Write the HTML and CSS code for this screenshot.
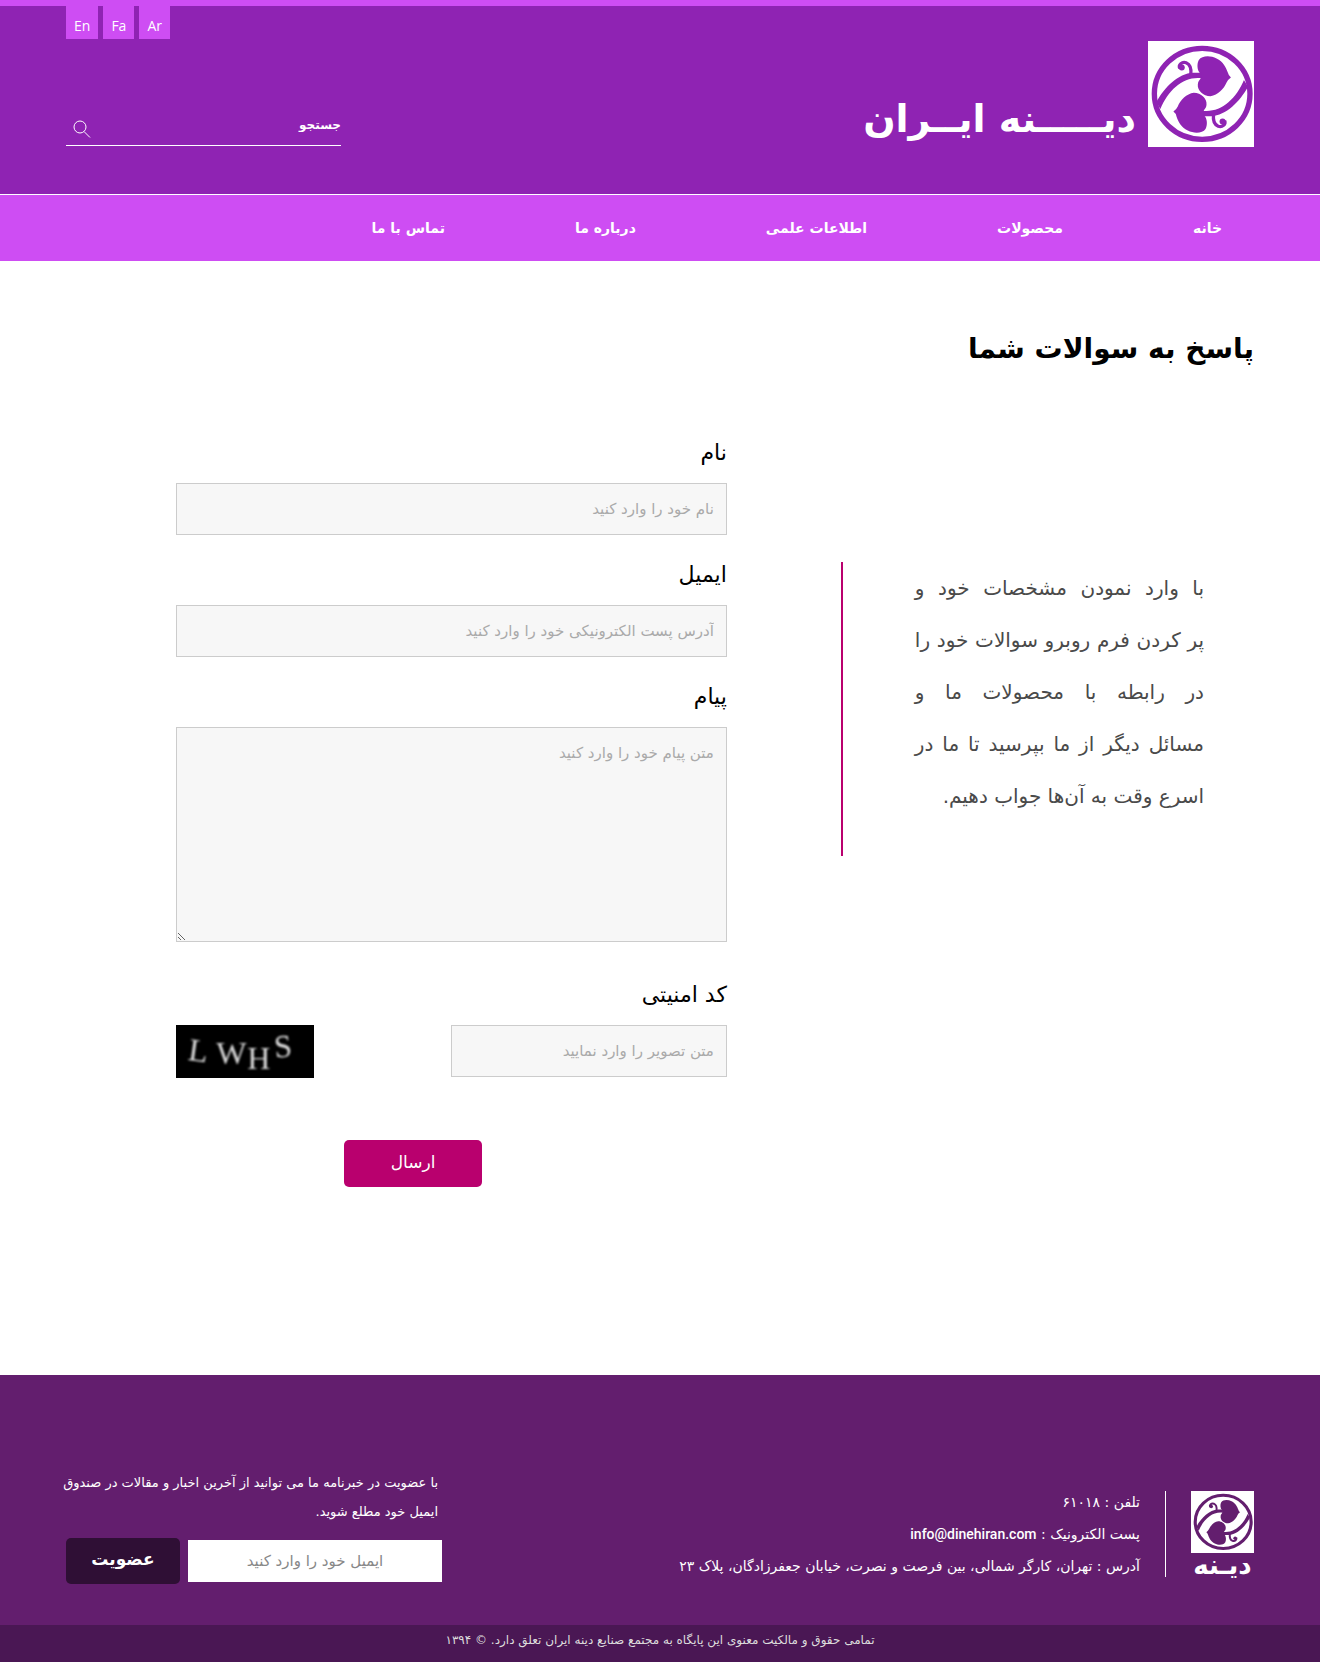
FILE: index.html
```html
<!DOCTYPE html>
<html lang="fa" dir="rtl">
<head>
<meta charset="utf-8">
<meta name="viewport" content="width=device-width, initial-scale=1">
<title>پاسخ به سوالات شما</title>
<link rel="stylesheet" href="styles.css">
</head>
<body>
<svg class="sprite" aria-hidden="true">
  <defs>
    <g id="leaf">
      <path d="M181 116C171 107 171 86 177 76C186 62 212 62 230 71C250 80 259 99 264 114Q266 123 273 128Q264 134 260 143C252 162 234 181 212 184C190 184 172 166 174 149C174 141 178 137 182 132Z"/>
      <path d="M50 202C74 158 115 116 160 114L184 114L184 130C132 124 86 164 62 222Z"/>
      <path d="M153 120C155 103 151 89 139 84C127 80 115 90 120 101" fill="none" stroke="currentColor" stroke-width="10"/>
      <circle cx="126" cy="98" r="9"/>
    </g>
    <symbol id="emblem" viewBox="25 19 317 317">
      <g fill="currentColor">
        <use href="#leaf"/>
        <use href="#leaf" transform="rotate(180 187 179)"/>
      </g>
      <ellipse cx="187" cy="177" rx="143" ry="136" fill="none" stroke="currentColor" stroke-width="16"/>
    </symbol>
  </defs>
</svg>

<header class="header">
  <div class="container header-row">
    <a class="brand" href="#">
      <svg class="brand-mark" aria-hidden="true"><use href="#emblem"/></svg>
      <span class="brand-name">دیـــــنه ایــران</span>
    </a>
    <div class="tools">
      <div class="languages" dir="ltr">
        <a href="#">En</a>
        <a href="#">Fa</a>
        <a href="#">Ar</a>
      </div>
      <form class="search">
        <input type="text" placeholder="جستجو" aria-label="جستجو">
        <button type="button" aria-label="جستجو">
          <svg viewBox="0 0 18 18" width="18" height="18" fill="none" stroke="#fff" aria-hidden="true"><circle cx="7" cy="7" r="6"/><path d="M11 11.500L17 17.500"/></svg>
        </button>
      </form>
    </div>
  </div>
</header>

<nav class="nav">
  <ul class="container nav-list">
    <li><a href="#">خانه</a></li>
    <li><a href="#">محصولات</a></li>
    <li><a href="#">اطلاعات علمی</a></li>
    <li><a href="#">درباره ما</a></li>
    <li><a href="#">تماس با ما</a></li>
  </ul>
</nav>

<main class="container main">
  <h1>پاسخ به سوالات شما</h1>
  <div class="contact">
    <p class="intro">با وارد نمودن مشخصات خود و پر&nbsp;کردن فرم روبرو سوالات خود را در رابطه با محصولات ما و مسائل&nbsp;دیگر از ما بپرسید تا ما در اسرع وقت به آن‌ها جواب دهیم.</p>
    <form class="form">
      <label for="name">نام</label>
      <input class="field" id="name" type="text" placeholder="نام خود را وارد کنید">
      <label for="email">ایمیل</label>
      <input class="field" id="email" type="text" placeholder="آدرس پست الکترونیکی خود را وارد کنید">
      <label for="message">پیام</label>
      <textarea class="field message" id="message" placeholder="متن پیام خود را وارد کنید"></textarea>
      <label for="code">کد امنیتی</label>
      <div class="captcha-row">
        <input class="field" id="code" type="text" placeholder="متن تصویر را وارد نمایید">
        <svg class="captcha" viewBox="0 0 137 53" role="img" aria-label="LWHS">
          <g class="captcha-text">
            <text x="12" y="36" transform="rotate(8 20 28)">L</text>
            <text x="40" y="39">W</text>
            <text x="71" y="44">H</text>
            <text x="98" y="32" transform="rotate(-5 106 25)">S</text>
          </g>
        </svg>
      </div>
      <button class="send" type="button">ارسال</button>
    </form>
  </div>
</main>

<footer class="footer">
  <div class="container footer-row">
    <div class="footer-brand">
      <svg class="footer-mark" aria-hidden="true"><use href="#emblem"/></svg>
      <span>دیـنه</span>
    </div>
    <address class="details">
      <span>تلفن : ۶۱۰۱۸</span>
      <span>پست الکترونیک : <a href="#">info@dinehiran.com</a></span>
      <span>آدرس : تهران، کارگر شمالی، بین فرصت و نصرت، خیابان جعفرزادگان، پلاک ۲۳</span>
    </address>
    <form class="newsletter">
      <p>با عضویت در خبرنامه ما می توانید از آخرین اخبار و مقالات در صندوق ایمیل خود مطلع شوید.</p>
      <div class="subscribe">
        <input type="text" placeholder="ایمیل خود را وارد کنید" aria-label="ایمیل">
        <button type="button">عضویت</button>
      </div>
    </form>
  </div>
  <p class="copyright">تمامی حقوق و مالکیت معنوی این پایگاه به مجتمع صنایع دینه ایران تعلق دارد. © ۱۳۹۴</p>
</footer>
</body>
</html>
```

FILE: styles.css
```css
* {
  box-sizing: border-box;
}

body {
  margin: 0;
  background: #fff;
  color: #000;
  font-family: "DejaVu Sans", sans-serif;
}

a {
  color: inherit;
  text-decoration: none;
}

input,
textarea,
button {
  font-family: inherit;
  margin: 0;
}

.sprite {
  position: absolute;
  width: 0;
  height: 0;
}

.container {
  width: 90%;
  margin: 0 auto;
}

.header {
  background: #8f23b3;
  color: #fff;
  border-top: 6px solid #ce4df3;
  border-bottom: 1px solid #fff;
}

.header-row {
  display: flex;
  justify-content: space-between;
  min-height: 188px;
}

.brand {
  display: flex;
  align-items: flex-start;
  gap: 12px;
  padding-top: 35px;
}

.brand-mark {
  width: 106px;
  height: 106px;
  background: #fff;
  color: #8f23b3;
}

.brand-name {
  font-size: 38px;
  font-weight: bold;
  line-height: 48px;
  padding-top: 54px;
}

.tools {
  width: 275px;
  display: flex;
  flex-direction: column;
  gap: 66px;
}

.languages {
  display: flex;
  gap: 5px;
  font-family: "Open Sans", sans-serif;
  font-size: 14px;
}

.languages a {
  background: #ce4df3;
  padding: 6px 8px 0;
  height: 33px;
  line-height: 27px;
}

.search {
  display: flex;
  align-items: center;
  height: 41px;
  border-bottom: 1px solid #fff;
}

.search input {
  flex: 1;
  min-width: 0;
  padding: 0;
  border: 0;
  background: none;
  color: #fff;
  font-size: 12px;
  font-weight: bold;
}

.search input::placeholder {
  color: #fff;
}

.search button {
  padding: 7px 7px 0;
  border: 0;
  background: none;
  line-height: 0;
}

.nav {
  background: #ce4df3;
  color: #fff;
}

.nav-list {
  display: flex;
  gap: 130px;
  padding: 0 32px;
  list-style: none;
  font-size: 14px;
  font-weight: bold;
  line-height: 66px;
  white-space: nowrap;
}

.main {
  padding: 56px 0 188px;
}

h1 {
  margin: 0;
  font-size: 28px;
  line-height: 64px;
}

.contact {
  display: grid;
  grid-template-columns: 3fr 4fr;
  column-gap: 114px;
  padding: 48px 0 0 110px;
}

.intro {
  align-self: start;
  margin: 133px 0 0;
  padding: 0 50px 34px 72px;
  border-left: 2px solid #b9006e;
  color: #4a4a4a;
  font-size: 20px;
  line-height: 52px;
  text-align: justify;
}

.form {
  display: flex;
  flex-direction: column;
}

.form label {
  font-size: 22px;
  line-height: 48px;
  padding-bottom: 6px;
}

.field {
  width: 100%;
  height: 52px;
  margin-bottom: 16px;
  padding: 0 12px;
  border: 1px solid #ccc;
  border-radius: 0;
  background: #f7f7f7;
  font-size: 15px;
}

.field::placeholder {
  color: #aaa;
}

.message {
  height: 215px;
  margin-bottom: 29px;
  padding-top: 16px;
}

.captcha-row {
  display: flex;
  justify-content: space-between;
}

.captcha-row .field {
  width: 50%;
}

.captcha {
  width: 25%;
  height: 53px;
  background: #000;
}

.captcha-text {
  direction: ltr;
  fill: #ddd;
  font: 32px "Liberation Serif", serif;
  filter: blur(1px);
}

.send {
  width: 25%;
  height: 47px;
  margin: 47px 245px 0 0;
  padding: 0 0 4px;
  border: 0;
  border-radius: 5px;
  background: #b9006e;
  color: #fff;
  font-size: 17px;
}

.footer {
  background: #631e6e;
  color: #fff;
}

.footer-row {
  display: flex;
  padding: 93px 0 41px;
}

.footer-brand {
  display: flex;
  flex-direction: column;
  width: 63px;
  margin-top: 23px;
  font-size: 26px;
  font-weight: bold;
  line-height: 24px;
  text-align: center;
}

.footer-mark {
  width: 63px;
  height: 62px;
  background: #fff;
  color: #631e6e;
}

.details {
  display: flex;
  flex-direction: column;
  height: 86px;
  margin: 23px 25px 0 auto;
  padding-right: 25px;
  border-right: 1px solid #fff;
  font-size: 14px;
  font-style: normal;
  line-height: 32px;
  white-space: nowrap;
}

.details span {
  margin-top: -5px;
  margin-bottom: 5px;
}

.details a {
  font-family: Roboto, sans-serif;
  font-size: 14px;
  font-weight: 500;
}

.newsletter {
  width: 376px;
}

.newsletter p {
  margin: 0 4px 12px -8px;
  font-size: 13px;
  line-height: 29px;
}

.subscribe {
  display: flex;
  align-items: center;
  gap: 8px;
}

.subscribe input {
  flex: 1;
  min-width: 0;
  height: 42px;
  border: 0;
  font-size: 15px;
  text-align: center;
}

.subscribe input::placeholder {
  color: #888;
}

.subscribe button {
  width: 114px;
  height: 46px;
  padding: 0 0 4px;
  border: 0;
  border-radius: 5px;
  background: #2f0f35;
  color: #fff;
  font-size: 17px;
  font-weight: bold;
}

.copyright {
  margin: 0;
  background: #4a1754;
  color: #ddd;
  font-size: 12px;
  line-height: 30px;
  padding-bottom: 7px;
  text-align: center;
}
```
